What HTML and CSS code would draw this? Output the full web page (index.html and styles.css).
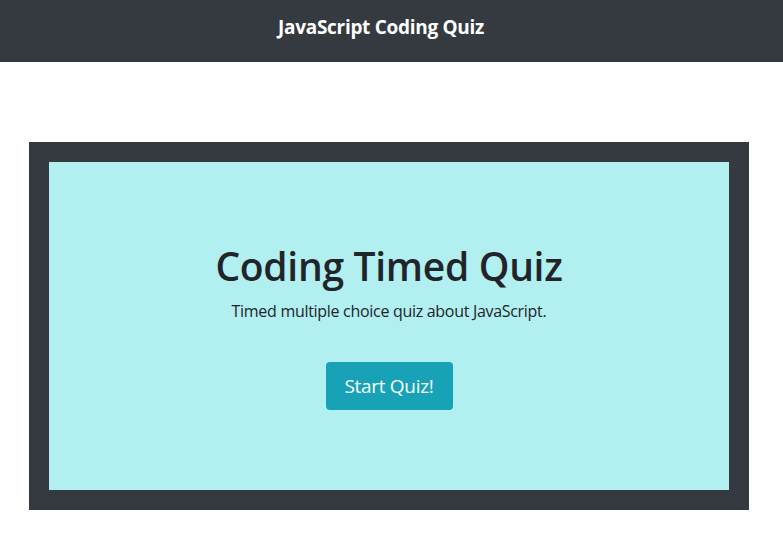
FILE: index.html
```html
<!DOCTYPE html>
<html lang="en">
<head>
<meta charset="utf-8">
<title>JavaScript Coding Quiz</title>
<link rel="stylesheet" href="styles.css">
</head>
<body>
<header class="topbar">
  <h2 class="brand">JavaScript Coding Quiz</h2>
</header>
<main class="main">
  <section class="frame">
    <div class="card">
      <h1 class="title">Coding Timed Quiz</h1>
      <p class="lead">Timed multiple choice quiz about JavaScript.</p>
      <button class="start">Start Quiz!</button>
    </div>
  </section>
</main>
</body>
</html>
```
FILE: styles.css
```css
html, body {
  margin: 0;
  padding: 0;
  background: #ffffff;
  font-family: "Open Sans", "Noto Sans", sans-serif;
  color: #212529;
}
.topbar {
  height: 62px;
  box-sizing: border-box;
  padding: 0 21px 8px 0;
  background: #343a40;
  display: flex;
  align-items: center;
  justify-content: center;
}
.brand {
  margin: 0;
  color: #ffffff;
  font-size: 19px;
  font-weight: 700;
  letter-spacing: -0.3px;
}
.main {
  padding: 80px 34px 0 29px;
}
.frame {
  width: 680px;
  padding: 20px;
  background: #343a40;
}
.card {
  height: 328px;
  background: #b1eff0;
  display: flex;
  flex-direction: column;
  align-items: center;
  box-sizing: border-box;
  padding-top: 80px;
}
.title {
  margin: 0;
  font-size: 39px;
  font-weight: 600;
  line-height: 48px;
  letter-spacing: -0.3px;
}
.lead {
  margin: 9px 0 0;
  font-size: 16px;
  line-height: 24px;
  letter-spacing: -0.3px;
}
.start {
  margin-top: 39px;
  width: 127px;
  height: 48px;
  border: none;
  border-radius: 4px;
  background: #17a2b8;
  color: #ffffff;
  font-family: inherit;
  font-size: 19px;
  letter-spacing: -0.3px;
  cursor: pointer;
}
```
